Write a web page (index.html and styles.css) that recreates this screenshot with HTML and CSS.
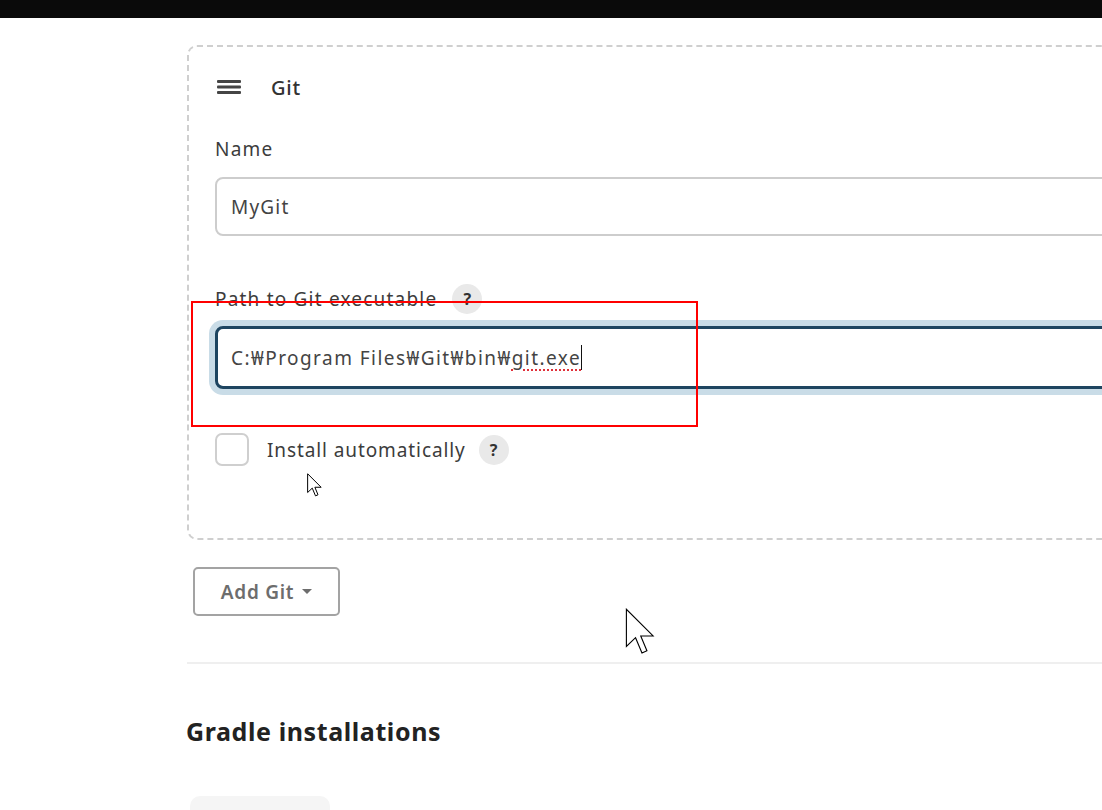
FILE: index.html
```html
<!DOCTYPE html>
<html lang="en">
<head>
<meta charset="utf-8">
<title>Tools – Git installations</title>
<link rel="stylesheet" href="styles.css">
</head>
<body>
<div class="topbar"></div>

<main class="page">
  <section class="repeated-chunk">
    <div class="chunk-header">
      <svg class="drag-handle" width="24" height="14" viewBox="0 0 24 14" aria-hidden="true">
        <rect x="0" y="0" width="24" height="3" rx="1" fill="#454545"/>
        <rect x="0" y="5.5" width="24" height="3" rx="1" fill="#454545"/>
        <rect x="0" y="11" width="24" height="3" rx="1" fill="#454545"/>
      </svg>
      <span class="chunk-title">Git</span>
    </div>

    <label class="field-label label-name" for="git-name">Name</label>
    <input class="text-field" id="git-name" type="text" value="MyGit">

    <div class="field-label label-path">
      <span>Path to Git executable</span>
      <span class="help">?</span>
    </div>
    <div class="text-field focused" role="textbox">
      <span>C:₩Program Files₩Git₩bin₩</span><span class="misspelt">git.exe</span><span class="caret"></span>
    </div>

    <div class="check-row">
      <span class="checkbox"></span>
      <span class="check-label">Install automatically</span>
      <span class="help">?</span>
    </div>

    <div class="highlight-box"></div>
    <svg class="pointer pointer-small" width="15" height="24" viewBox="0 0 12 19" aria-hidden="true">
      <path d="M0.5 0.5V15.5L4.2 12L6.8 18.2L8.8 17.3L6.3 11.3H11.3Z" fill="#fff" stroke="#000" stroke-width="0.8" stroke-linejoin="miter"/>
    </svg>
  </section>

  <div class="actions">
    <button class="add-button" type="button">Add Git <span class="dropdown-caret"></span></button>
    <svg class="pointer pointer-large" width="30" height="47" viewBox="0 0 12 19" aria-hidden="true">
      <path d="M0.5 0.5V15.5L4.2 12L6.8 18.2L8.8 17.3L6.3 11.3H11.3Z" fill="#fff" stroke="#000" stroke-width="0.45" stroke-linejoin="miter"/>
    </svg>
  </div>

  <hr class="divider">

  <h2 class="section-title">Gradle installations</h2>
  <div class="next-button"></div>
</main>
</body>
</html>
```

FILE: styles.css
```css
html, body {
  margin: 0;
  padding: 0;
  background: #ffffff;
  overflow: hidden;
  height: 810px;
}

body {
  font-family: "Noto Sans", "Noto Sans CJK KR", sans-serif;
  color: #333;
}

.topbar {
  height: 18px;
  background: #0a0a0a;
}

.page {
  padding-left: 187px;
  width: 1000px;
}

/* dashed block holding one tool installation */
.repeated-chunk {
  position: relative;
  margin-top: 27px;
  border: 2px dashed #cfcfcf;
  border-radius: 10px;
  padding: 28px 0 72px 26px;
  display: flex;
  flex-direction: column;
  align-items: flex-start;
}

.chunk-header {
  display: flex;
  align-items: center;
  height: 24px;
  gap: 30px;
  padding-left: 2px;
}

.chunk-title {
  font-size: 20px;
  font-weight: 500;
  letter-spacing: 0.8px;
  color: #333;
}

.field-label {
  display: flex;
  align-items: center;
  gap: 15px;
  height: 24px;
  font-size: 19px;
  letter-spacing: 1.2px;
  color: #3c3c3c;
}

.label-name {
  margin-top: 38px;
}

.label-path {
  margin-top: 51px;
}

.help {
  width: 30px;
  height: 30px;
  border-radius: 50%;
  background: #e9e9e9;
  color: #333;
  font-size: 16px;
  font-weight: 700;
  letter-spacing: 0;
  display: inline-flex;
  align-items: center;
  justify-content: center;
}

.text-field {
  box-sizing: border-box;
  width: 100%;
  margin: 16px 0 0;
  height: 59px;
  padding: 0 14px;
  border: 2px solid #cdcdcd;
  border-radius: 8px;
  font-family: inherit;
  font-size: 19px;
  letter-spacing: 1.2px;
  color: #444;
  background: #fff;
  outline: none;
  display: flex;
  align-items: center;
}

.text-field.focused {
  margin-top: 15px;
  height: 63px;
  border: 3px solid #1e4560;
  box-shadow: 0 0 0 6px #c9dce7;
  padding-left: 13px;
  letter-spacing: 1.45px;
  white-space: pre;
}

.misspelt {
  text-decoration: underline dotted #e0303a;
  text-decoration-thickness: 2px;
  text-underline-offset: 5px;
}

.caret {
  display: inline-block;
  width: 1.2px;
  height: 25px;
  background: #111;
}

.check-row {
  margin-top: 44px;
  display: flex;
  align-items: center;
  height: 33px;
}

.checkbox {
  box-sizing: border-box;
  width: 34px;
  height: 33px;
  border: 2px solid #cfcfcf;
  border-radius: 7px;
  margin-right: 18px;
}

.check-label {
  font-size: 19px;
  letter-spacing: 0.9px;
  color: #3c3c3c;
  margin-right: 13px;
}

/* red annotation frame drawn over the path field */
.highlight-box {
  position: absolute;
  left: 2px;
  top: 254px;
  width: 507px;
  height: 126px;
  box-sizing: border-box;
  border: 2px solid #ff0000;
  pointer-events: none;
}

.pointer {
  position: absolute;
  pointer-events: none;
}

.pointer-small {
  left: 118px;
  top: 426px;
}

.actions {
  position: relative;
  padding: 27px 0 0 6px;
  height: 49px;
}

.add-button {
  box-sizing: border-box;
  width: 147px;
  height: 49px;
  border: 2px solid #a3a3a3;
  border-radius: 5px;
  background: #fff;
  font-family: inherit;
  font-size: 19px;
  font-weight: 600;
  letter-spacing: 0.7px;
  color: #6d6d6d;
  display: flex;
  align-items: center;
  justify-content: center;
  gap: 8px;
  padding: 0;
}

.dropdown-caret {
  width: 0;
  height: 0;
  border-left: 5px solid transparent;
  border-right: 5px solid transparent;
  border-top: 5px solid #6d6d6d;
}

.pointer-large {
  left: 438px;
  top: 68px;
}

.divider {
  margin: 46px 0 0;
  border: 0;
  height: 2px;
  background: #efefef;
}

.section-title {
  margin: 51px 0 0 -1px;
  font-size: 25px;
  line-height: 32px;
  font-weight: 700;
  letter-spacing: 0.6px;
  color: #222;
}

.next-button {
  margin: 49px 0 0 3px;
  width: 140px;
  height: 40px;
  border-radius: 10px;
  background: #f5f5f5;
}
```
